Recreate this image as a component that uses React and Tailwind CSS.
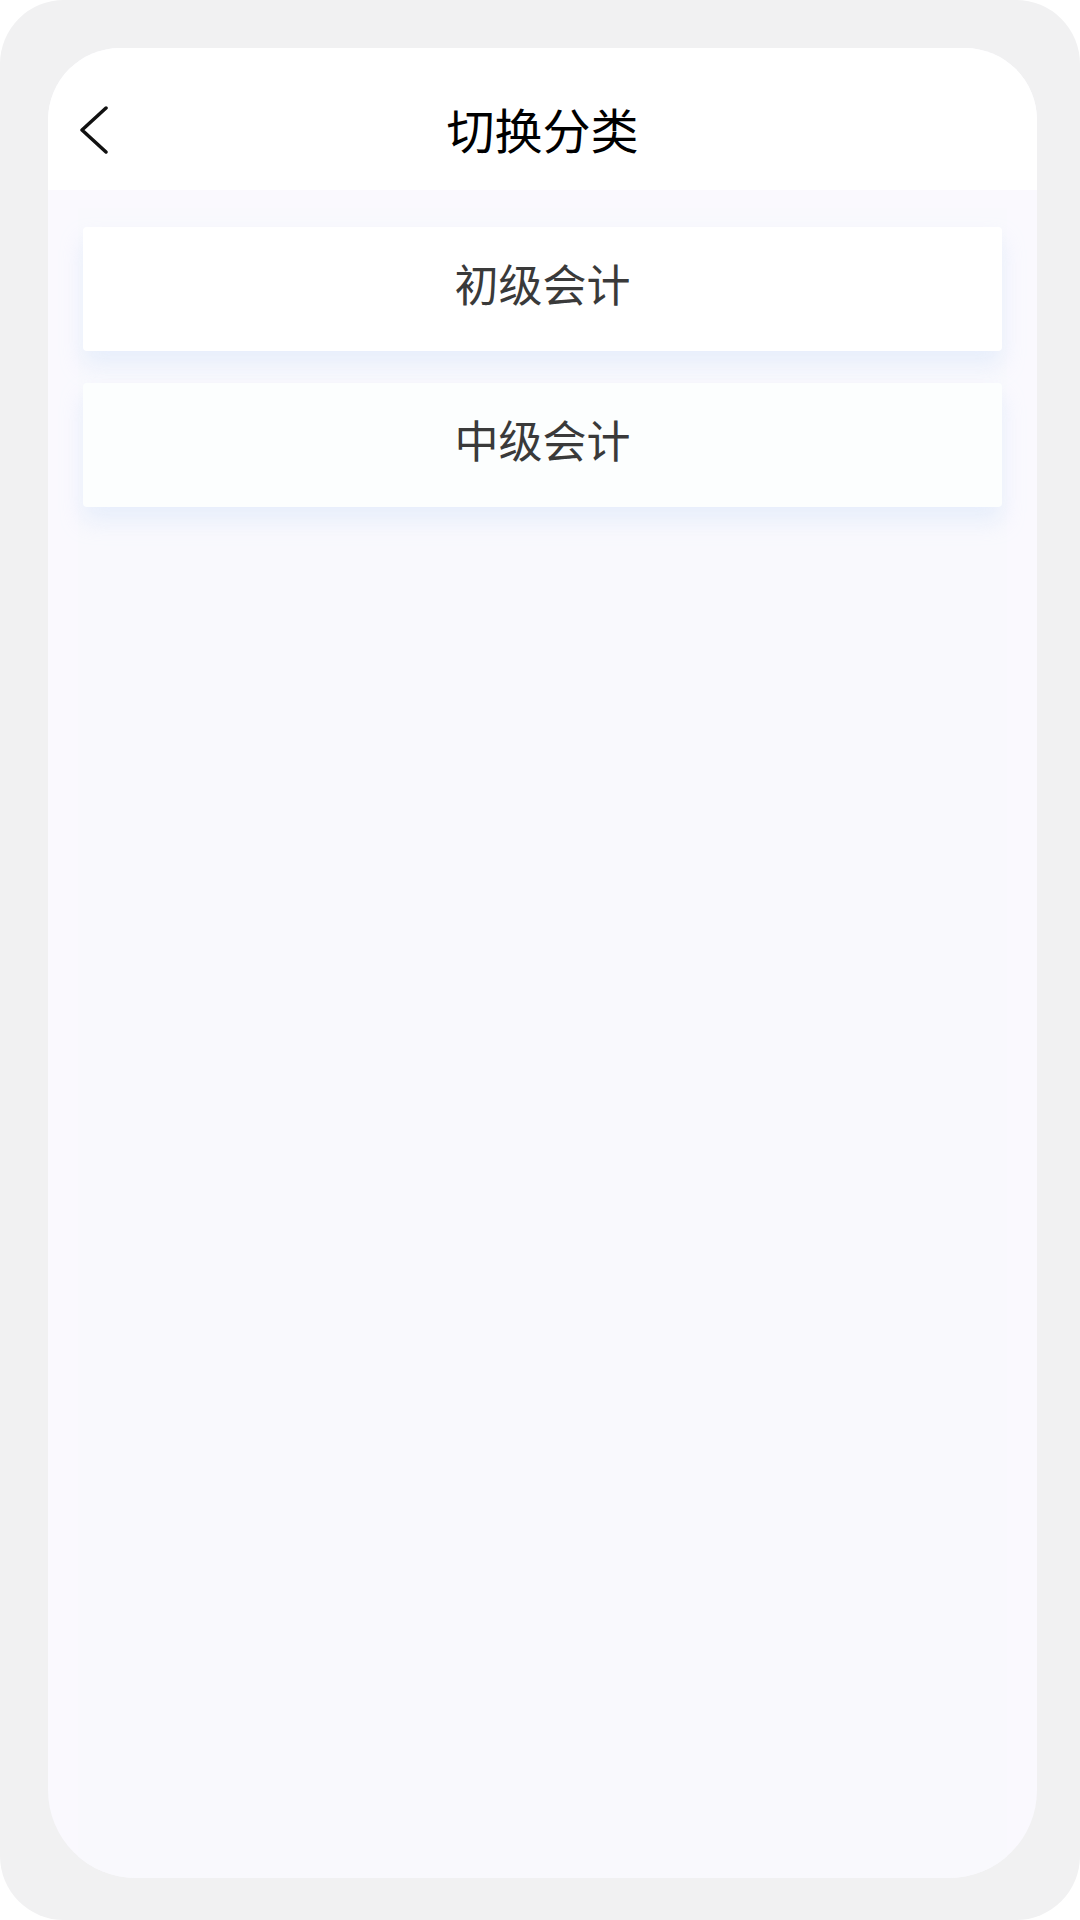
export default function App() {
  const items = [
    { name: "初级会计", bg: "bg-white" },
    { name: "中级会计", bg: "bg-[#fcfefe]" },
  ];

  return (
    <div className="bg-white w-[1080px] h-[1920px]">
      <div className="w-[1080px] h-[1920px] rounded-[64px] bg-[#f1f1f2] pt-12 pb-[42px] pl-12 pr-[43px] flex">
        <div
          className="flex-1 flex flex-col rounded-t-[72px] rounded-b-[88px] bg-[#faf9fe] overflow-hidden"
          style={{ fontFamily: '"Noto Sans CJK SC", "Noto Sans", sans-serif' }}
        >
          {/* Header */}
          <div className="relative h-[142px] bg-white flex items-center justify-center shrink-0">
            <svg
              className="absolute left-[31px] top-[58px]"
              width="29"
              height="48"
              viewBox="0 0 29 48"
              fill="none"
            >
              <path
                d="M27 2 L3 24 L27 46"
                stroke="#111"
                strokeWidth="3.5"
                strokeLinecap="round"
                strokeLinejoin="round"
              />
            </svg>
            <h1 className="text-[48px] leading-none text-black mt-[18px]">切换分类</h1>
          </div>

          {/* List */}
          <div className="flex-1 px-[30px] pt-[18px] flex flex-col">
            <div className="flex-1 bg-[#f9f9fd] px-[5px] pt-[19px] flex flex-col gap-8">
              {items.map((item) => (
                <div
                  key={item.name}
                  className={`${item.bg} h-[124px] rounded-[4px] flex items-center justify-center shadow-[0_14px_22px_rgba(205,222,250,0.4)]`}
                >
                  <span className="text-[44px] leading-none text-[#3a3a3a] mb-[12px]">{item.name}</span>
                </div>
              ))}
            </div>
          </div>
        </div>
      </div>
    </div>
  );
}
